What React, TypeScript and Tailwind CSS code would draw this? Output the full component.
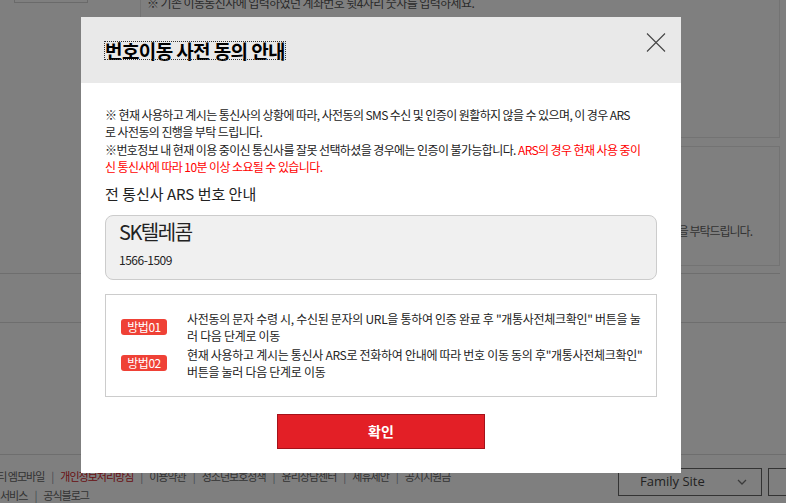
const footerLinks = [
  { label: "케이티 엠모바일" },
  { label: "개인정보처리방침", red: true },
  { label: "이용약관" },
  { label: "청소년보호정책" },
  { label: "윤리상담센터" },
  { label: "제휴제안" },
  { label: "공시지원금" },
];

const methods = [
  {
    badge: "방법01",
    lines: [
      '사전동의 문자 수령 시, 수신된 문자의 URL을 통하여 인증 완료 후 "개통사전체크확인" 버튼을 눌',
      "러 다음 단계로 이동",
    ],
  },
  {
    badge: "방법02",
    lines: [
      '현재 사용하고 계시는 통신사 ARS로 전화하여 안내에 따라 번호 이동 동의 후"개통사전체크확인"',
      "버튼을 눌러 다음 단계로 이동",
    ],
  },
];

function BackgroundPage() {
  return (
    <div className="flex h-full flex-col">
      <div className="flex h-[274px] w-[780px] shrink-0 border-b border-[#dcdcdc]">
        <div className="w-[140px] shrink-0 pl-[14px]">
          <div className="h-[3px] w-[74px] border-x border-b border-[#d5d5d5]" />
        </div>
        <div className="flex flex-1 flex-col">
          <div className="-mt-[10px] h-[148px] border border-[#e6e6e6] pl-[6px] pt-[4px]">
            <p className="whitespace-nowrap text-[12px] leading-[16px] tracking-[-0.6px] text-[#555]">
              ※ 기존 이동통신사에 입력하였던 계좌번호 뒷4자리 숫자를 입력하세요.
            </p>
            <div className="ml-[3px] mt-[6px] h-[30px] w-[176px] rounded-full border border-[#e0e0e0] bg-[#f7f7f7]" />
          </div>
          <div className="mt-[8px] flex h-[120px] flex-col justify-end border border-[#e6e6e6] pb-[26px] pr-[27px] text-right">
            <p className="whitespace-nowrap text-[12px] leading-[16px] tracking-[-1px] text-[#666]">
              유심 정보를 확인하신 후 다시 진행을 부탁드립니다.
            </p>
          </div>
        </div>
      </div>
      <div className="h-[49px] shrink-0 border-b border-[#dcdcdc]" />
      <div className="h-[132px] shrink-0 border-b border-[#dcdcdc]" />
      <div className="flex flex-1 overflow-hidden">
        <div className="w-[618px] shrink-0 pt-[12px] text-[11px] leading-[19px] tracking-[-1px] text-[#666]">
          <div className="-ml-[21px] flex whitespace-nowrap">
            {footerLinks.map((link, i) => (
              <span key={link.label} className="flex">
                {i > 0 && <span className="px-[7px] text-[#8a96a3]">|</span>}
                <span className={link.red ? "text-[#d2232a]" : ""}>{link.label}</span>
              </span>
            ))}
          </div>
          <div className="flex whitespace-nowrap">
            <span>서비스</span>
            <span className="px-[7px] text-[#8a96a3]">|</span>
            <span>공식블로그</span>
          </div>
        </div>
        <div className="flex shrink-0 pt-[13px]">
          <div className="flex h-[28px] w-[144px] items-center justify-between border border-[#666] pl-[21px] pr-[14px] text-[13px] text-[#444]">
            <span className="font-['Open_Sans',sans-serif]">Family Site</span>
            <svg width="10" height="6" viewBox="0 0 10 6" fill="none" stroke="#777" strokeWidth="1.3">
              <path d="M1 1l4 4 4-4" />
            </svg>
          </div>
          <div className="ml-[6px] h-[28px] w-[60px] border border-[#666]" />
        </div>
      </div>
    </div>
  );
}

export default function App() {
  return (
    <div className="relative h-[503px] w-[786px] overflow-hidden bg-white font-['Noto_Sans_CJK_KR',sans-serif] text-[#222]">
      <BackgroundPage />
      <div className="absolute inset-0 bg-black/50" />

      <div className="absolute left-[81px] top-[17px] w-[600px] bg-white">
        <div className="flex h-[66px] justify-between bg-[#e9e9e9] pl-[24px] pr-[15px]">
          <h2 className="self-center text-[19px] font-bold leading-[17px] tracking-[-0.6px] text-black outline-1 outline-dotted outline-[#333]">
            번호이동 사전 동의 안내
          </h2>
          <button className="mt-[16px] self-start">
            <svg width="20" height="19" viewBox="0 0 20 19" fill="none" stroke="#444" strokeWidth="1.1">
              <path d="M1 0.5L19 18.5M19 0.5L1 18.5" />
            </svg>
          </button>
        </div>

        <div className="flex flex-col px-[24px] pb-[24px] pt-[23px]">
          <p className="whitespace-nowrap text-[12px] leading-[17.3px] tracking-[-0.6px]">
            ※ 현재 사용하고 계시는 통신사의 상황에 따라, 사전동의 SMS 수신 및 인증이 원활하지 않을 수 있으며, 이 경우 ARS
            <br />
            로 사전동의 진행을 부탁 드립니다.
            <br />
            ※번호정보 내 현재 이용 중이신 통신사를 잘못 선택하셨을 경우에는 인증이 불가능합니다.{" "}
            <span className="text-[#ff0000]">
              ARS의 경우 현재 사용 중이
              <br />
              신 통신사에 따라 10분 이상 소요될 수 있습니다.
            </span>
          </p>

          <h3 className="mt-[9px] text-[15px] leading-[20px]">전 통신사 ARS 번호 안내</h3>

          <div className="mt-[11px] flex flex-col rounded-[8px] border border-[#cccccc] bg-[#f0f0f0] pb-[11px] pl-[13px] pt-[4px]">
            <span className="text-[20px] leading-[24px] tracking-[-1.5px]">SK텔레콤</span>
            <span className="mt-[8px] text-[12px] leading-[16px] tracking-[-0.5px]">1566-1509</span>
          </div>

          <div className="mt-[14px] flex flex-col gap-[2px] border border-[#cccccc] pb-[16px] pl-[15px] pr-[4px] pt-[15px]">
            {methods.map((m) => (
              <div key={m.badge} className="flex items-center gap-[20px]">
                <span className="flex h-[16px] w-[46px] shrink-0 items-center justify-center rounded-[3px] bg-[#ef4136] text-[12px] tracking-[-0.5px] text-white">
                  {m.badge}
                </span>
                <p className="whitespace-nowrap text-[12px] leading-[17px] tracking-[-0.3px]">
                  {m.lines[0]}
                  <br />
                  {m.lines[1]}
                </p>
              </div>
            ))}
          </div>

          <button className="mx-auto mt-[17px] flex h-[35px] w-[208px] items-center justify-center border border-[#a5121a] bg-[#e31f26] text-[14px] font-bold text-white">
            확인
          </button>
        </div>
      </div>
    </div>
  );
}
